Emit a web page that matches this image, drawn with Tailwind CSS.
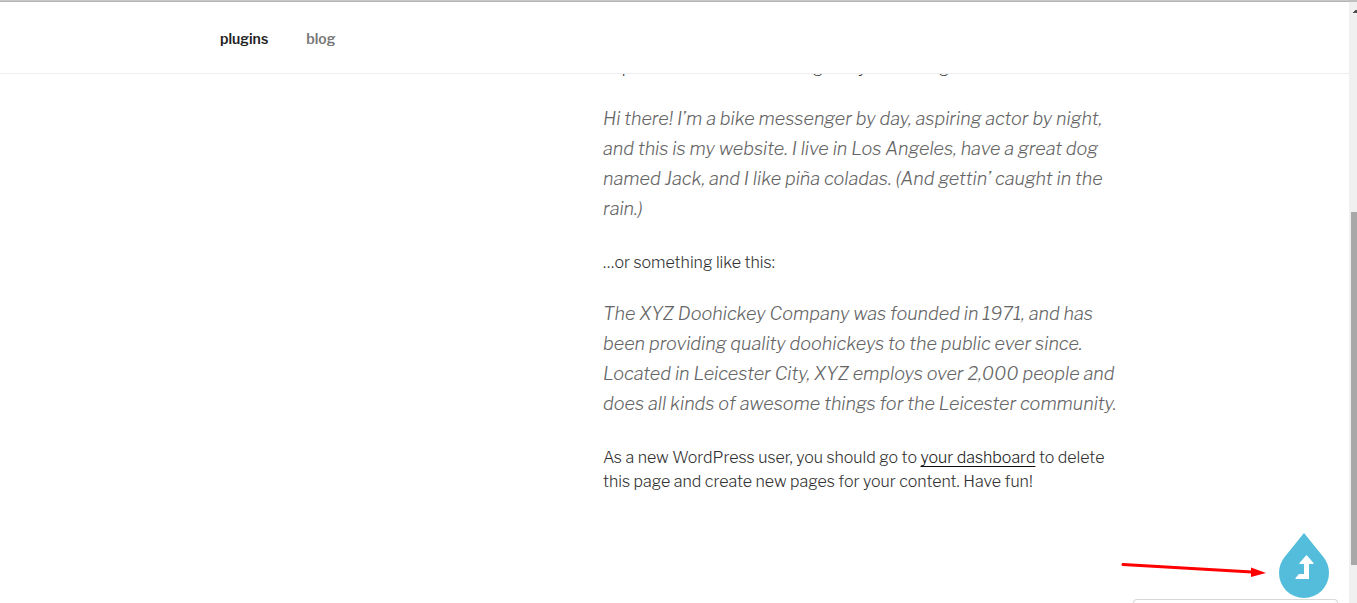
<!DOCTYPE html>
<html lang="en">
<head>
<meta charset="utf-8">
<meta name="viewport" content="width=device-width, initial-scale=1">
<title>Sample Page</title>
<script src="https://cdn.jsdelivr.net/npm/@tailwindcss/browser@4"></script>
</head>
<body class="flex h-screen overflow-hidden bg-white font-['Libre_Franklin',Inter,sans-serif] text-base font-light text-[#333333]">
  <div class="relative min-w-0 flex-1 overflow-hidden">
    <header class="absolute inset-x-0 top-0 z-10 border-t border-b border-t-[#c8c8c8] border-b-[#eeeeee] bg-white">
      <div class="h-px bg-[#b4b4b4]"></div>
      <nav class="flex h-[71px] items-center gap-[38px] pt-0.5 pl-[220px] text-sm font-semibold" aria-label="Top menu">
        <a href="#" class="text-[#222222]">plugins</a>
        <a href="#" class="text-[#767676]">blog</a>
      </nav>
    </header>

    <main class="ml-[603px] mr-[220px] pt-14">
      <p class="mb-6 whitespace-nowrap">to potential site visitors. It might say something like this:</p>
      <blockquote class="mb-[27px] whitespace-nowrap text-[18px] leading-[30px] text-[#666666] italic">
        <p>Hi there! I’m a bike messenger by day, aspiring actor by night,<br>and this is my website. I live in Los Angeles, have a great dog<br>named Jack, and I like piña coladas. (And gettin’ caught in the<br>rain.)</p>
      </blockquote>
      <p class="mb-6">…or something like this:</p>
      <blockquote class="mb-[27px] whitespace-nowrap text-[18px] leading-[30px] text-[#666666] italic">
        <p>The XYZ Doohickey Company was founded in 1971, and has<br>been providing quality doohickeys to the public ever since.<br>Located in Leicester City, XYZ employs over 2,000 people and<br>does all kinds of awesome things for the Leicester community.</p>
      </blockquote>
      <p class="whitespace-nowrap">As a new WordPress user, you should go to <a href="#" class="text-[#222222] underline decoration-[#0f0f0f] decoration-1 underline-offset-3 [text-decoration-skip-ink:none]">your dashboard</a> to delete<br>this page and create new pages for your content. Have fun!</p>
    </main>

    <div class="absolute right-[11px] bottom-0 h-1 w-[205px] rounded-t-md border border-b-0 border-[#d8d8d8]"></div>
    <svg class="absolute right-[83px] bottom-[26px] h-4 w-[146px]" viewBox="0 0 146 16" aria-hidden="true">
      <path d="M3 3.500L132 11" stroke="#ff0000" stroke-width="3" stroke-linecap="round"/>
      <path d="M131 6.500L146 12L131 16Z" fill="#ff0000"/>
    </svg>
    <button type="button" aria-label="Back to top" class="absolute right-5 bottom-1">
      <svg class="block h-[66px] w-[50px]" viewBox="0 0 50 66" aria-hidden="true">
        <path d="M25 0L44 23.500C48 28 50 34 50 40A25 25 0 0 1 0 40C0 34 2 28 6 23.500Z" fill="#53bddb"/>
        <path d="M27.500 22L34.500 30V31H30V46H16.500V45L20 41H25V31H20.500V30Z" fill="#ffffff"/>
      </svg>
    </button>
  </div>

  <div class="relative w-2 shrink-0 border-t-2 border-t-[#c0c0c0] bg-[#f0f0f0] pt-[210px] pl-0.5" aria-hidden="true">
    <svg class="absolute top-2 right-0 h-3 w-1" viewBox="0 0 4 12"><path d="M0 3V2H1V1H2V0H4V3Z" fill="#505050"/></svg>
    <div class="h-[353px] bg-[#a8a8a8]"></div>
  </div>
</body>
</html>
